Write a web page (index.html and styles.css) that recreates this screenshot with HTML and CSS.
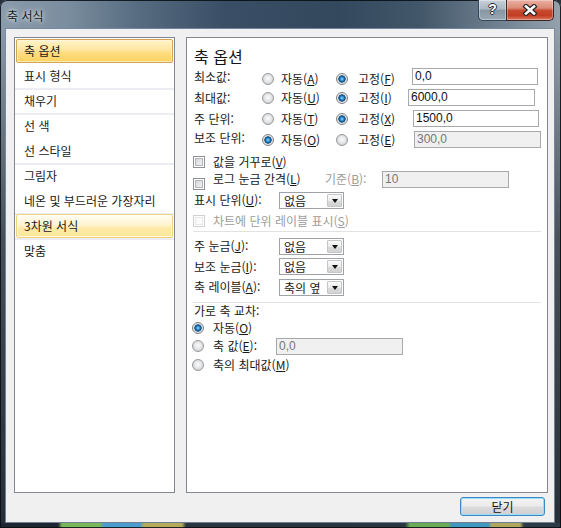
FILE: index.html
```html
<!DOCTYPE html>
<html lang="ko">
<head>
<meta charset="utf-8">
<title>축 서식</title>
<link rel="stylesheet" href="styles.css">
</head>
<body>
<div class="window">
  <div class="titlebar">
    <span class="title">축 서식</span>
    <div class="caption">
      <div class="cap-help">?</div>
      <div class="cap-close">
        <svg width="16" height="12" viewBox="0 0 16 12"><path d="M4 2.5 L12 9.5 M12 2.5 L4 9.5" stroke="#2a2a2a" stroke-width="5" stroke-linecap="square"/><path d="M4 2.5 L12 9.5 M12 2.5 L4 9.5" stroke="#ffffff" stroke-width="2.6" stroke-linecap="square"/></svg>
      </div>
    </div>
  </div>
  <div class="client">
    <div class="main">
      <ul class="nav">
        <li class="item"><span class="lbl sel">축 옵션</span></li>
        <li class="item"><span class="lbl">표시 형식</span></li>
        <li class="item sep"><span class="lbl">채우기</span></li>
        <li class="item sep"><span class="lbl">선 색</span></li>
        <li class="item"><span class="lbl">선 스타일</span></li>
        <li class="item sep"><span class="lbl">그림자</span></li>
        <li class="item"><span class="lbl">네온 및 부드러운 가장자리</span></li>
        <li class="item sep"><span class="lbl hover">3차원 서식</span></li>
        <li class="item sep"><span class="lbl">맞춤</span></li>
      </ul>
      <div class="panel">
        <div class="heading">축 옵션</div>

        <div class="orow r1">
          <span class="lab">최소값:</span>
          <span class="opt opt1"><span class="radio"></span>자동(<u>A</u>)</span>
          <span class="opt opt2"><span class="radio on"></span>고정(<u>F</u>)</span>
          <span class="tb b1">0,0</span>
        </div>
        <div class="orow r2">
          <span class="lab">최대값:</span>
          <span class="opt opt1"><span class="radio"></span>자동(<u>U</u>)</span>
          <span class="opt opt2"><span class="radio on"></span>고정(<u>I</u>)</span>
          <span class="tb b2">6000,0</span>
        </div>
        <div class="orow r3">
          <span class="lab">주 단위:</span>
          <span class="opt opt1"><span class="radio"></span>자동(<u>T</u>)</span>
          <span class="opt opt2"><span class="radio on"></span>고정(<u>X</u>)</span>
          <span class="tb b3">1500,0</span>
        </div>
        <div class="orow r4">
          <span class="lab">보조 단위:</span>
          <span class="opt opt1"><span class="radio on"></span>자동(<u>O</u>)</span>
          <span class="opt opt2"><span class="radio"></span>고정(<u>E</u>)</span>
          <span class="tb b4 dis">300,0</span>
        </div>

        <div class="crow c1">
          <span class="cb"></span><span>값을 거꾸로(<u>V</u>)</span>
        </div>
        <div class="crow c2">
          <span class="cb"></span><span class="c2-text">로그 눈금 간격(<u>L</u>)</span>
          <span class="base dim">기준(<u>B</u>):</span>
          <span class="tb b5 dis">10</span>
        </div>
        <div class="crow c3">
          <span class="lab2">표시 단위(<u>U</u>):</span>
          <span class="combo"><span class="val">없음</span><span class="dd"></span></span>
        </div>
        <div class="crow c4">
          <span class="cb off"></span><span class="dim">차트에 단위 레이블 표시(<u>S</u>)</span>
        </div>

        <div class="hr hr1"></div>

        <div class="crow t1">
          <span class="lab2">주 눈금(<u>J</u>):</span>
          <span class="combo"><span class="val">없음</span><span class="dd"></span></span>
        </div>
        <div class="crow t2">
          <span class="lab2">보조 눈금(<u>I</u>):</span>
          <span class="combo"><span class="val">없음</span><span class="dd"></span></span>
        </div>
        <div class="crow t3">
          <span class="lab2">축 레이블(<u>A</u>):</span>
          <span class="combo"><span class="val">축의 옆</span><span class="dd"></span></span>
        </div>

        <div class="hr hr2"></div>

        <div class="cross-head">가로 축 교차:</div>
        <div class="crow x1">
          <span class="radio on"></span><span>자동(<u>O</u>)</span>
        </div>
        <div class="crow x2">
          <span class="radio"></span><span class="x2-text">축 값(<u>E</u>):</span>
          <span class="tb b6 dis">0,0</span>
        </div>
        <div class="crow x3">
          <span class="radio"></span><span>축의 최대값(<u>M</u>)</span>
        </div>
      </div>
    </div>
    <div class="footer">
      <button class="btn" type="button">닫기</button>
    </div>
  </div>
</div>
</body>
</html>
```
FILE: styles.css
```css
html, body {
  margin: 0;
  padding: 0;
}
body {
  background: #27313c;
  font-family: "Noto Sans CJK KR", "Noto Sans", sans-serif;
  font-size: 12px;
  color: #1a1a1a;
}
u { text-decoration: underline; text-underline-offset: 1px; }

.window {
  width: 561px;
  height: 528px;
  box-sizing: border-box;
  padding: 0 7px 6px 6px;
  display: flex;
  flex-direction: column;
  border-radius: 7px 7px 0 0;
  overflow: hidden;
  box-shadow: inset 0 0 0 1px rgba(8, 12, 18, 0.85);
  background:
    linear-gradient(90deg, #1d2630 0, #1d2630 58px, #78b85a 62px, #78b85a 100px, #4a9ccf 104px, #4a9ccf 140px, #b3aa5e 144px, #b3aa5e 182px, #2a3540 186px, #2a3540 405px, #6cab55 410px, #6cab55 448px, #3f97c2 452px, #3f97c2 488px, #b0a75e 492px, #b0a75e 520px, #2c3946 524px) left bottom / 100% 5px no-repeat,
    linear-gradient(180deg, rgba(0,0,0,0) 0, rgba(0,0,0,0) 28px, rgba(12,18,26,0.55) 45%, rgba(12,18,26,0.8) 100%),
    linear-gradient(90deg, #8a9bab 0%, #7a8d9e 12%, #566b80 25%, #3a4f65 40%, #33485d 60%, #425769 75%, #6d7e8e 88%, #95a2ad 100%);
}

.titlebar {
  height: 29px;
  flex: none;
  display: flex;
  align-items: flex-start;
}
.title {
  margin: 8px 0 0 1px;
  line-height: 16px;
  font-size: 12px;
  color: #101820;
  text-shadow: 0 0 6px rgba(255,255,255,0.9), 0 0 3px rgba(255,255,255,0.7);
}
.caption {
  margin-left: auto;
  display: flex;
  height: 21px;
}
.cap-help {
  width: 28px;
  height: 21px;
  box-sizing: border-box;
  border: 1px solid #36465a;
  border-top: none;
  border-right: none;
  border-radius: 0 0 0 5px;
  background: linear-gradient(180deg, #c8d1d9 0%, #aab6c1 45%, #8796a4 52%, #9aa8b5 100%);
  box-shadow: inset 0 0 0 1px rgba(255,255,255,0.35);
  color: #fff;
  font-family: "Liberation Sans", sans-serif;
  font-weight: bold;
  font-size: 14px;
  line-height: 19px;
  text-align: center;
  text-shadow: 1px 0 0 #2a2a2a, -1px 0 0 #2a2a2a, 0 1px 0 #2a2a2a, 0 -1px 0 #2a2a2a;
}
.cap-close {
  width: 48px;
  height: 21px;
  box-sizing: border-box;
  border: 1px solid #3a2622;
  border-top: none;
  border-radius: 0 0 5px 0;
  background: linear-gradient(180deg, #e9b0a3 0%, #dc8a76 40%, #c84a30 52%, #c23d22 78%, #dc7b62 100%);
  box-shadow: inset 0 0 0 1px rgba(255,255,255,0.3);
  display: flex;
  align-items: center;
  justify-content: center;
}

.client {
  flex: 1;
  background: #f0f0f0;
  box-shadow: 0 0 0 1px rgba(120, 138, 156, 0.9);
  box-sizing: border-box;
  padding: 8px 6px 6px 8px;
  display: flex;
  flex-direction: column;
}
.main {
  display: flex;
  height: 456px;
  gap: 11px;
}

.nav {
  width: 161px;
  height: 456px;
  box-sizing: border-box;
  margin: 0;
  padding: 1px 0 0;
  list-style: none;
  background: #fff;
  border: 1px solid #838790;
}
.item {
  height: 25px;
}
.item.sep {
  box-shadow: 0 -1px 0 #ebedf3, inset 0 1px 0 #ebedf3;
}
.lbl {
  display: block;
  height: 24px;
  margin: 0 1px;
  box-sizing: border-box;
  border: 1px solid transparent;
  border-radius: 2px;
  padding-left: 7px;
  line-height: 22px;
  white-space: nowrap;
}
.lbl.sel {
  border-color: #d1a552;
  background: linear-gradient(180deg, #fff3c9 0%, #ffe8a6 40%, #fedc7f 60%, #fbd15f 100%);
  box-shadow: inset 0 0 0 1px rgba(255,250,225,0.6);
}
.lbl.hover {
  border-color: #f0d27c;
  background: linear-gradient(180deg, #fffdf3 0%, #fff4cf 45%, #fdeaa8 60%, #fce697 100%);
  box-shadow: inset 0 0 0 1px rgba(255,255,255,0.7);
}

.panel {
  width: 362px;
  height: 456px;
  box-sizing: border-box;
  background: #fff;
  border: 1px solid #838790;
  padding: 8px 7px 0 7px;
  display: flex;
  flex-direction: column;
}
.heading {
  height: 20px;
  line-height: 20px;
  font-size: 16px;
  color: #141414;
}

.orow, .crow {
  display: flex;
  align-items: center;
  white-space: nowrap;
  line-height: 16px;
}
.orow { height: 21px; }
.lab { width: 67px; flex: none; }
.opt { display: flex; align-items: center; flex: none; }
.opt1 { width: 74px; }
.opt2 { width: 72px; }
.opt1 .radio { margin: 0 7px 0 1px; }
.opt2 .radio { margin: 0 10px 0 1px; }
.r1 .opt { margin-top: 4px; }
.r4 .lab { margin-bottom: 4px; }

.radio {
  flex: none;
  width: 12px;
  height: 12px;
  box-sizing: border-box;
  border-radius: 50%;
  border: 1px solid #96999c;
  background: radial-gradient(circle at 50% 45%, #fbfbfb 0, #ececec 2.5px, #d3d5d7 5.5px);
}
.radio.on {
  border-color: #7d8287;
  background: radial-gradient(circle at 50% 50%, #a8e0ff 0, #3a99dc 1.4px, #0e5c9d 2.8px, #1a4a73 3.4px, #d9dadb 3.9px, #f2f2f2 5.5px);
}

.tb {
  flex: none;
  height: 17px;
  box-sizing: border-box;
  border: 1px solid #a7a9ad;
  background: #fff;
  padding-left: 2px;
  font-family: "Liberation Sans", sans-serif;
  font-size: 12px;
  line-height: 15px;
  color: #111;
}
.tb.dis { background: #f0f0f0; color: #767676; }
.b1 { margin-left: 5px; width: 126px; }
.b2 { margin-left: 1px; width: 127px; }
.b3 { margin-left: 6px; width: 126px; }
.b4 { margin-left: 7px; width: 127px; }
.b5 { width: 127px; margin-bottom: 3px; }
.b6 { width: 127px; }

.cb {
  flex: none;
  width: 12px;
  height: 12px;
  box-sizing: border-box;
  margin: 0 8px 0 -1px;
  border: 1px solid #8e9092;
  background: linear-gradient(135deg, #cbced3 0%, #e6e7e9 55%, #f7f7f7 100%);
  box-shadow: inset 0 0 0 1px #fff, inset 0 0 0 2px #b3b7bc;
}
.cb.off {
  border-color: #cfd0d1;
  background: #fcfcfc;
  box-shadow: inset 0 0 0 1px #fff, inset 0 0 0 2px #e6e7e8;
}
.dim { color: #9c9c9c; }

.c1 { height: 20px; margin-top: 2px; }
.c2 { height: 18px; }
.c2 .cb { margin-top: 5px; }
.c2-text { width: 112px; flex: none; margin-bottom: 4px; }
.base { width: 57px; flex: none; margin-bottom: 4px; }
.c3 { height: 20px; }
.c4 { height: 21px; }

.lab2 { width: 85px; flex: none; }
.combo {
  flex: none;
  width: 65px;
  height: 17px;
  box-sizing: border-box;
  border: 1px solid #9fa3a8;
  background: #fff;
  display: flex;
}
.combo .val {
  flex: 1;
  padding-left: 4px;
  line-height: 15px;
}
.combo .dd {
  width: 15px;
  height: 13px;
  margin: 1px;
  box-sizing: border-box;
  border: 1px solid #c4c6c9;
  border-radius: 1px;
  background: linear-gradient(180deg, #fafafa 0%, #ececec 50%, #dcdcdc 51%, #d2d2d2 100%);
  display: flex;
  align-items: center;
  justify-content: center;
}
.combo .dd::after {
  content: "";
  border-left: 3px solid transparent;
  border-right: 3px solid transparent;
  border-top: 4px solid #111;
  margin-top: 1px;
}

.hr {
  height: 1px;
  flex: none;
  background: #e2e2e2;
  margin: 0 -1px;
}
.hr1 { margin-top: 0; }
.t1 { height: 20px; margin-top: 4px; }
.t2 { height: 21px; }
.t3 { height: 20px; }
.hr2 { margin-top: 5px; }

.cross-head {
  height: 16px;
  line-height: 16px;
}
.x1 { height: 18px; }
.x2 { height: 18px; }
.x3 { height: 20px; }
.x1 .radio, .x2 .radio, .x3 .radio { margin: 0 9px 0 -2px; }
.x2-text { width: 63px; flex: none; }

.footer {
  display: flex;
  justify-content: flex-end;
  margin-top: 4px;
}
.btn {
  width: 85px;
  height: 19px;
  margin: 0 3px 0 0;
  padding: 0;
  box-sizing: border-box;
  border: 1px solid #3b8ac4;
  border-radius: 3px;
  background: linear-gradient(180deg, #f3f3f3 0%, #ebebeb 48%, #dcdcdc 52%, #cfcfcf 100%);
  box-shadow: inset 0 0 0 1px #9ddcf8;
  font-family: "Noto Sans CJK KR", sans-serif;
  font-size: 12px;
  line-height: 16px;
  color: #111;
}
```
